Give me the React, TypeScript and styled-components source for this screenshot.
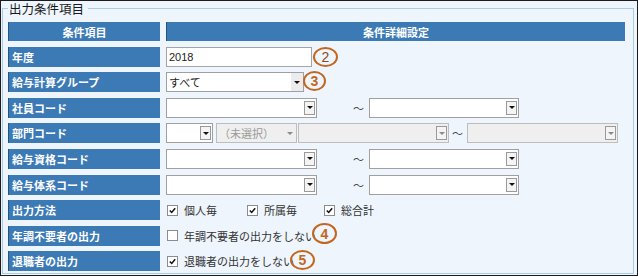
import { createGlobalStyle, styled } from "styled-components";

const GlobalStyle = createGlobalStyle`
  body {
    margin: 0;
    background: #ffffff;
  }
`;

const Frame = styled.div`
  position: relative;
  width: 638px;
  height: 276px;
  box-sizing: border-box;
  border: 1px solid #1c1c1c;
  background: #eef5fc;
  font-family: "Noto Sans CJK JP", sans-serif;
`;

const Panel = styled.fieldset`
  margin: 0 3px 0 1px;
  padding: 6px 0 0 5px;
  height: 273px;
  box-sizing: border-box;
  border: 1px solid #a9cce9;
  min-inline-size: 0;
`;

const Legend = styled.legend`
  padding: 0 4px 0 1px;
  font-size: 12.5px;
  line-height: 15px;
  color: #1a1a1a;
`;

const Grid = styled.div`
  display: grid;
  grid-template-columns: 152px 459px;
  grid-template-rows: 19px repeat(9, 20px);
  column-gap: 6px;
  row-gap: 5.6px;
`;

const Label = styled.div<{ $center?: boolean }>`
  display: flex;
  align-items: center;
  justify-content: ${(p) => (p.$center ? "center" : "flex-start")};
  padding-left: ${(p) => (p.$center ? "0" : "3px")};
  background: #3c7ab6;
  border-left: 1px solid #24557f;
  color: #ffffff;
  font-size: 11px;
  font-weight: bold;
  white-space: nowrap;
`;

const Cell = styled.div`
  display: flex;
  align-items: center;
  font-size: 11px;
  color: #333333;
  white-space: nowrap;
`;

const TextBox = styled.input<{ $w: number }>`
  width: ${(p) => p.$w}px;
  height: 20px;
  box-sizing: border-box;
  margin: 0;
  padding: 0 2px;
  border: 1px solid #a5a5a5;
  background: #ffffff;
  font-family: "Liberation Sans", sans-serif;
  font-size: 11px;
  color: #222222;
  outline: none;
`;

const SelectBox = styled.div<{ $w: number; $off?: boolean }>`
  display: flex;
  align-items: center;
  justify-content: space-between;
  width: ${(p) => p.$w}px;
  height: 20px;
  box-sizing: border-box;
  padding-left: 2px;
  border: 1px solid ${(p) => (p.$off ? "#bdbdbd" : "#a0a0a0")};
  background: ${(p) => (p.$off ? "#efefef" : "#ffffff")};
  color: ${(p) => (p.$off ? "#9a9a9a" : "#222222")};
`;

const DropButton = styled.span<{ $flat?: boolean; $off?: boolean }>`
  display: flex;
  align-items: center;
  justify-content: center;
  width: ${(p) => (p.$flat ? 12 : 11)}px;
  height: ${(p) => (p.$flat ? 18 : 14)}px;
  margin-right: ${(p) => (p.$flat ? 0 : 1)}px;
  box-sizing: border-box;
  border: ${(p) => (p.$flat ? "none" : "1px solid #9a9a9a")};
  background: ${(p) => (p.$flat ? (p.$off ? "transparent" : "#ececec") : "#f4f4f4")};
`;

const Triangle = styled.span<{ $off?: boolean }>`
  width: 0;
  height: 0;
  border-left: 3px solid transparent;
  border-right: 3px solid transparent;
  border-top: 3px solid ${(p) => (p.$off ? "#8a8a8a" : "#111111")};
`;

const Tilde = styled.span<{ $before: number; $after: number }>`
  margin: 0 ${(p) => p.$after}px 0 ${(p) => p.$before}px;
  font-size: 11px;
  color: #444444;
`;

const Gap = styled.span<{ $w: number }>`
  width: ${(p) => p.$w}px;
  flex: none;
`;

const CheckItem = styled.span<{ $w?: number }>`
  display: inline-flex;
  align-items: center;
  gap: 6px;
  width: ${(p) => (p.$w ? `${p.$w}px` : "auto")};
`;

const Box = styled.span`
  display: flex;
  align-items: center;
  justify-content: center;
  width: 9px;
  height: 9px;
  margin-left: 1px;
  border: 1px solid #8c8c8c;
  background: #ffffff;
`;

const Mark = styled.div<{ $x: number; $y: number; $w: number; $h: number; $thin?: boolean }>`
  position: absolute;
  left: ${(p) => p.$x - 1}px;
  top: ${(p) => p.$y - 1}px;
  width: ${(p) => p.$w}px;
  height: ${(p) => p.$h}px;
  box-sizing: border-box;
  display: flex;
  align-items: center;
  justify-content: center;
  border: 2.8px solid #c2671f;
  border-radius: 50%;
  font-family: "Liberation Sans", sans-serif;
  font-size: 14px;
  font-weight: ${(p) => (p.$thin ? "normal" : "bold")};
  color: ${(p) => (p.$thin ? "#8a4a1e" : "#c2671f")};
`;

function Select({ w, text, off, flat }: { w: number; text?: string; off?: boolean; flat?: boolean }) {
  return (
    <SelectBox $w={w} $off={off}>
      <span>{text}</span>
      <DropButton $flat={flat} $off={off}>
        <Triangle $off={off} />
      </DropButton>
    </SelectBox>
  );
}

function Check({ on, text, w }: { on?: boolean; text: string; w?: number }) {
  return (
    <CheckItem $w={w}>
      <Box>
        {on && (
          <svg width="7" height="7" viewBox="0 0 7 7">
            <path d="M0.8 3.4 L2.7 5.4 L6.2 1.2" stroke="#111" strokeWidth="1.5" fill="none" />
          </svg>
        )}
      </Box>
      {text}
    </CheckItem>
  );
}

function Range() {
  return (
    <Cell>
      <Select w={151} />
      <Tilde $before={36} $after={5}>～</Tilde>
      <Select w={150} />
    </Cell>
  );
}

export default function App() {
  return (
    <>
      <GlobalStyle />
      <Frame>
        <Panel>
          <Legend>出力条件項目</Legend>
          <Grid>
            <Label $center>条件項目</Label>
            <Label $center>条件詳細設定</Label>

            <Label>年度</Label>
            <Cell>
              <TextBox $w={146} defaultValue="2018" />
            </Cell>

            <Label>給与計算グループ</Label>
            <Cell>
              <Select w={138} text="すべて" flat />
            </Cell>

            <Label>社員コード</Label>
            <Range />

            <Label>部門コード</Label>
            <Cell>
              <Select w={47} />
              <Gap $w={3} />
              <Select w={81} text="（未選択）" off flat />
              <Gap $w={1} />
              <Select w={151} off />
              <Tilde $before={3} $after={4}>～</Tilde>
              <Select w={151} off />
            </Cell>

            <Label>給与資格コード</Label>
            <Range />

            <Label>給与体系コード</Label>
            <Range />

            <Label>出力方法</Label>
            <Cell>
              <Check on text="個人毎" w={80} />
              <Check on text="所属毎" w={77} />
              <Check on text="総合計" />
            </Cell>

            <Label>年調不要者の出力</Label>
            <Cell>
              <Check text="年調不要者の出力をしない" />
            </Cell>

            <Label>退職者の出力</Label>
            <Cell>
              <Check on text="退職者の出力をしない" />
            </Cell>
          </Grid>
        </Panel>
        <Mark $x={313} $y={47} $w={25} $h={20} $thin>2</Mark>
        <Mark $x={303} $y={71} $w={23} $h={20}>3</Mark>
        <Mark $x={312} $y={223} $w={25} $h={21}>4</Mark>
        <Mark $x={290} $y={250} $w={25} $h={20}>5</Mark>
      </Frame>
    </>
  );
}
